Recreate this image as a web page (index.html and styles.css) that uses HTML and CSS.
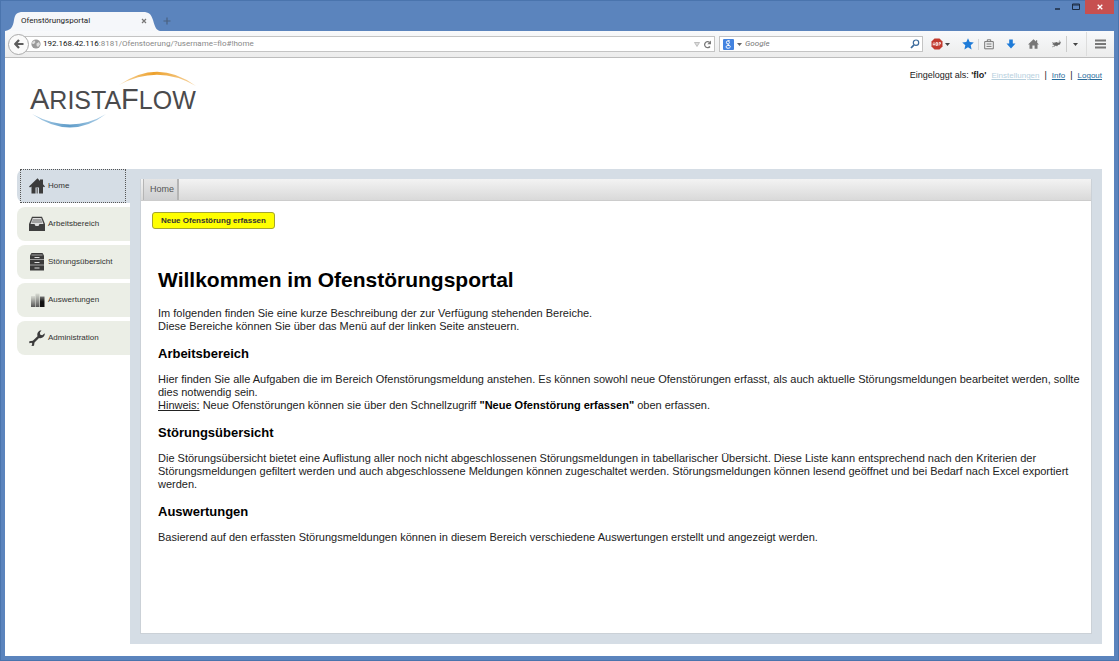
FILE: index.html
```html
<!DOCTYPE html>
<html lang="de">
<head>
<meta charset="utf-8">
<title>Ofenstörungsportal</title>
<link rel="stylesheet" href="styles.css">
</head>
<body>
<div class="window">
  <header class="titlebar">
    <div class="tab">
      <svg class="tab-shape" viewBox="0 0 155 20" preserveAspectRatio="none" aria-hidden="true"><path d="M0 20C6 19 8 16 9 9C10 3 12 1 18 1H138C144 1 146 3 148 9C150 16 151 19 155 20Z" fill="#f5f7fa"/></svg>
      <span class="tab-title">Ofenstörungsportal</span>
      <button class="tab-close" aria-label="Tab schließen"><svg width="6" height="6" viewBox="0 0 6 6"><path d="M1 1L5 5M5 1L1 5" stroke="#777" stroke-width="1.2"/></svg></button>
    </div>
    <button class="new-tab" aria-label="Neuer Tab"><svg width="8" height="8" viewBox="0 0 8 8"><path d="M4 .5V7.500M.5 4H7.500" stroke="#4a6180" stroke-width="1.200"/></svg></button>
    <div class="win-controls">
      <button class="win-btn" aria-label="Minimieren"><svg width="8" height="8" viewBox="0 0 8 8"><path d="M1 6H6" stroke="#1c2b40" stroke-width="1.500"/></svg></button>
      <button class="win-btn" aria-label="Maximieren"><svg width="8" height="8" viewBox="0 0 8 8"><path d="M.5 1H7.500V6.500H.5ZM.5 2H7.500" fill="none" stroke="#1c2b40"/></svg></button>
      <button class="win-btn win-close" aria-label="Schließen"><svg width="6" height="6" viewBox="0 0 6 6"><path d="M.7.7L5.300 5.300M5.300.7L.7 5.300" stroke="#fff" stroke-width="1.300"/></svg></button>
    </div>
  </header>

  <div class="toolbar">
    <button class="back" aria-label="Zurück"><svg width="10" height="10" viewBox="0 0 10 10"><path d="M5 1L1.300 5L5 9M1.500 5H9.500" fill="none" stroke="#5c5c5c" stroke-width="2.200"/></svg></button>
    <div class="address" role="textbox" aria-label="Adresse">
      <svg class="globe" width="10" height="10" viewBox="0 0 10 10"><circle cx="5" cy="5" r="4.600" fill="#999"/><path d="M1 3.500L3.500 1.500L4.500 3L3 5L1.500 5ZM5.500 4.500L8 3L9 5.500L7 8L5.500 6.500Z" fill="#ddd"/></svg>
      <span class="url"><b>192.168.42.116</b>:8181/Ofenstoerung/?username=flo#!home</span>
      <svg width="6" height="5" viewBox="0 0 6 5"><path d="M.5.5H5.500L3 4.500Z" fill="#ddd" stroke="#aaa" stroke-width=".7"/></svg>
      <button class="icon-btn" aria-label="Neu laden"><svg width="9" height="9" viewBox="0 0 9 9"><path d="M7 6.500A3 3 0 1 1 6.500 2.300" fill="none" stroke="#777" stroke-width="1.300"/><path d="M8 .5V4.300H4.300Z" fill="#777"/></svg></button>
    </div>
    <label class="search">
      <svg width="11" height="11" viewBox="0 0 11 11"><rect width="11" height="11" rx="1" fill="#4383e0"/><path d="M6.800 1.800H5A1.600 1.600 0 1 0 5 5C7 5 6.700 2 5 2M5 5C4.500 6 7.300 6 7.300 7.700C7.300 9.700 3 9.700 3 8C3 6.700 4.500 6.300 6 6.500" fill="none" stroke="#fff" stroke-width="1"/></svg>
      <svg width="5" height="3" viewBox="0 0 5 3"><path d="M0 0H5L2.500 3Z" fill="#666"/></svg>
      <input class="search-input" type="text" placeholder="Google" aria-label="Suche">
      <svg width="10" height="10" viewBox="0 0 10 10"><circle cx="6" cy="3.700" r="2.700" fill="none" stroke="#3c6a9c" stroke-width="1.200"/><path d="M4 5.800L1 9" stroke="#3c6a9c" stroke-width="1.700"/></svg>
    </label>
    <div class="tools">
      <button class="icon-btn abp" aria-label="Adblock Plus"><svg width="19" height="12" viewBox="0 0 19 12"><path d="M3.500.5H8.500L11.500 3.500V8.500L8.500 11.500H3.500L.5 8.500V3.500Z" fill="#c23a2e"/><path d="M2.200 7.500V5.500L3 4.500L3.800 5.500V7.500M2.200 6.500H3.800M5 4.500V7.500H6.500V4.500ZM5 6H6.500M8 7.700V4.500H9.500V6H8" fill="none" stroke="#fff" stroke-width=".7"/><path d="M14 5H19L16.500 8Z" fill="#444"/></svg></button>
      <button class="icon-btn" aria-label="Lesezeichen"><svg width="12" height="12" viewBox="0 0 12 12"><path d="M6 .3L7.700 4.100L11.800 4.500L8.700 7.300L9.600 11.500L6 9.300L2.400 11.500L3.300 7.300L.2 4.500L4.300 4.100Z" fill="#1e7bd8"/></svg></button>
      <button class="icon-btn ruled" aria-label="Lesezeichenliste"><svg width="10" height="11" viewBox="0 0 10 11"><path d="M.7 2.600H9.300V9.800H.7ZM3.300 2.500V.8H6.700V2.500M2.500 5H7.500M2.500 7.400H7.500" fill="none" stroke="#777"/></svg></button>
      <button class="icon-btn" aria-label="Downloads"><svg width="10" height="10" viewBox="0 0 10 10"><path d="M3.200.5H6.800V4.500H9.500L5 9.500L.5 4.500H3.200Z" fill="#1e7bd8"/></svg></button>
      <button class="icon-btn" aria-label="Startseite"><svg width="11" height="10" viewBox="0 0 11 10"><path d="M5.500.2L8 2.600V1.300H9.200V3.800L11 5.500H9.500V9.700H6.600V6.500H4.400V9.700H1.500V5.500H0Z" fill="#777"/></svg></button>
      <button class="icon-btn" aria-label="Erweiterung"><svg width="11" height="9" viewBox="0 0 11 9"><path d="M2 3L6 2L7 3L10 1.500L9 4.500L7 5L6 6.500L5 5.500L2.500 7L3.500 5L1.500 4.500Z" fill="#666"/><path d="M1 2.500L4 3.500M8.500.5L8 3M1 7L4 5.500" stroke="#888" stroke-width=".7"/></svg></button>
      <button class="icon-btn ruled-left" aria-label="Mehr"><svg width="5" height="3" viewBox="0 0 5 3"><path d="M0 0H5L2.500 3Z" fill="#444"/></svg></button>
      <button class="icon-btn menu" aria-label="Menü"><svg width="11" height="10" viewBox="0 0 11 10"><path d="M0 1.500H11M0 5H11M0 8.500H11" stroke="#777" stroke-width="2"/></svg></button>
    </div>
  </div>

  <div class="page">
    <div class="page-head">
      <svg class="logo" width="172" height="62" viewBox="0 0 172 62" role="img" aria-label="AristaFlow">
        <defs>
          <linearGradient id="orange"><stop offset="0" stop-color="#f7d9a8"/><stop offset=".45" stop-color="#eda12c"/><stop offset="1" stop-color="#f6d6a6"/></linearGradient>
          <linearGradient id="blue"><stop offset="0" stop-color="#b5d4ea"/><stop offset=".5" stop-color="#5f9cc9"/><stop offset="1" stop-color="#b5d4ea"/></linearGradient>
        </defs>
        <path d="M91 17Q130-10 168 18Q130-4 91 17Z" fill="url(#orange)"/>
        <path d="M4 46Q43 73 78 46Q43 67 4 46Z" fill="url(#blue)"/>
        <g class="logo-text"><text x="2" y="41"><tspan class="cap">A</tspan><tspan class="small">RISTA</tspan><tspan class="cap">F</tspan><tspan class="small">LOW</tspan></text></g>
      </svg>
      <div class="account"><span>Eingeloggt als: <b>'flo'</b></span> <a class="disabled" href="#einstellungen">Einstellungen</a><span>|</span><a href="#info">Info</a><span>|</span><a href="#logout">Logout</a></div>
    </div>

    <div class="portal">
      <nav class="side" aria-label="Hauptmenü">
        <a class="side-item active" href="#home"><svg width="16" height="16" viewBox="0 0 16 16"><path d="M8.500.3L11 3V1.500H14V6.200L16 8.500L15 9.300L14 8.500V15.500H10V9.500H6.500V15.500H2.500V8.500L1 9.500L0 8.500Z" fill="#3b3b3b"/><path d="M7.500 10V15.500H9V10Z" fill="#777"/></svg>Home</a>
        <a class="side-item" href="#arbeitsbereich"><svg width="16" height="16" viewBox="0 0 16 16"><path d="M3 .8H13L16 8V15H0V8Z" fill="#3f3f3f"/><path d="M3.700 2H12.300L14.500 8H10.500L9.500 10H6.500L5.500 8H1.500Z" fill="#ddd"/><path d="M3.500 4H12.500M2.800 6H13.200" stroke="#666"/></svg>Arbeitsbereich</a>
        <a class="side-item" href="#stoerungen"><svg width="16" height="18" viewBox="0 0 16 18"><path d="M2.500 0H13.500L15 2.500V17.500H1V2.500Z" fill="#3b3b3b"/><path d="M1 6.500H15M1 12H15M2.500 2H13.500" stroke="#bbb" stroke-width=".8"/><path d="M5.500 4.500H10.500M5.500 9.500H10.500M5.500 15H10.500" fill="none" stroke="#ddd"/></svg>Störungsübersicht</a>
        <a class="side-item" href="#auswertungen"><svg width="16" height="16" viewBox="0 0 16 16"><defs><linearGradient id="fade" x2="0" y2="1"><stop offset="0" stop-color="#d9dcd4"/><stop offset="1" stop-color="#555"/></linearGradient><linearGradient id="dark" x2="0" y2="1"><stop offset="0" stop-color="#777"/><stop offset=".5" stop-color="#111"/></linearGradient></defs><path d="M2 4H6V15H2Z" fill="url(#fade)"/><path d="M6.500 1.500H10.500V15H6.500Z" fill="url(#fade)"/><path d="M11 4.500H15.500V15H11Z" fill="url(#dark)"/></svg>Auswertungen</a>
        <a class="side-item" href="#administration"><svg width="16" height="16" viewBox="0 0 16 16"><path d="M.3 11.300L3.800 10.800L8.500 6.200C7.700 3 9.300.5 12.500.2L10.800 2.800L11.300 4.800L13.200 5.200L15.800 3.300C16 6.700 13 8.800 10 8L5.500 12.500L5 15.800L2.500 16L3.300 13.700L2.500 12.700L.3 13.300Z" fill="#3b3b3b"/></svg>Administration</a>
      </nav>
      <main class="frame">
        <section class="panel">
          <div class="tabs" role="tablist"><button class="page-tab" role="tab" aria-selected="true">Home</button></div>
          <div class="content">
            <button class="primary">Neue Ofenstörung erfassen</button>
            <article class="article">
              <h1>Willkommen im Ofenstörungsportal</h1>
              <p>Im folgenden finden Sie eine kurze Beschreibung der zur Verfügung stehenden Bereiche.<br>Diese Bereiche können Sie über das Menü auf der linken Seite ansteuern.</p>
              <h2>Arbeitsbereich</h2>
              <p>Hier finden Sie alle Aufgaben die im Bereich Ofenstörungsmeldung anstehen. Es können sowohl neue Ofenstörungen erfasst, als auch aktuelle Störungsmeldungen bearbeitet werden, sollte dies notwendig sein.<br><u>Hinweis:</u> Neue Ofenstörungen können sie über den Schnellzugriff <b>"Neue Ofenstörung erfassen"</b> oben erfassen.</p>
              <h2>Störungsübersicht</h2>
              <p>Die Störungsübersicht bietet eine Auflistung aller noch nicht abgeschlossenen Störungsmeldungen in tabellarischer Übersicht. Diese Liste kann entsprechend nach den Kriterien der Störungsmeldungen gefiltert werden und auch abgeschlossene Meldungen können zugeschaltet werden. Störungsmeldungen können lesend geöffnet und bei Bedarf nach Excel exportiert werden.</p>
              <h2>Auswertungen</h2>
              <p>Basierend auf den erfassten Störungsmeldungen können in diesem Bereich verschiedene Auswertungen erstellt und angezeigt werden.</p>
            </article>
          </div>
        </section>
      </main>
    </div>
  </div>
</div>
</body>
</html>
```

FILE: styles.css
```css
* { box-sizing: border-box; }

body {
  margin: 0;
  font-family: "Liberation Sans", Arial, sans-serif;
  font-size: 11px;
  line-height: 13px;
  color: #222;
}

button {
  margin: 0;
  padding: 0;
  border: 0;
  background: none;
  font: inherit;
  color: inherit;
}

svg { display: block; flex: none; }

.window {
  display: flex;
  flex-direction: column;
  min-height: 100vh;
  padding: 0 5px 5px;
  background: #5b84bd;
  box-shadow: inset 0 0 0 1px #4a74ad;
}

/* Browser chrome */
.titlebar { display: flex; align-items: flex-end; height: 31px; }

.tab {
  position: relative;
  display: flex;
  align-items: center;
  width: 155px;
  height: 20px;
  padding: 0 13px 0 16px;
  font: 8px/12px Roboto, "Noto Sans", sans-serif;
  color: #222;
}
.tab-shape { position: absolute; inset: 0; width: 100%; height: 100%; }
.tab-title { position: relative; flex: 1; }
.tab-close { position: relative; }
.new-tab { padding: 0 0 6px 3px; }

.win-controls { display: flex; align-self: flex-start; margin-left: auto; }
.win-btn { display: flex; align-items: center; justify-content: center; width: 18px; height: 14px; }
.win-close { width: 29px; background: #c75050; }

.toolbar {
  display: flex;
  align-items: center;
  height: 27px;
  padding: 0 8px 0 3px;
  background: linear-gradient(#f8f9fb, #ececec);
  border-bottom: 1px solid #bdbdbd;
  font: 8px/12px Roboto, "Noto Sans", sans-serif;
}
.back {
  z-index: 1;
  display: flex;
  align-items: center;
  justify-content: center;
  width: 21px;
  height: 21px;
  border: 1px solid #aaa;
  border-radius: 50%;
  background: #fafafa;
}
.address {
  display: flex;
  flex: 1;
  align-items: center;
  gap: 3px;
  height: 16px;
  margin-left: -4px;
  padding: 0 2px 0 5px;
  border: 1px solid #c4c4c4;
  background: #fff;
  color: #888;
}
.url { flex: 1; margin-left: -1px; white-space: nowrap; }
.url b { font-weight: 400; color: #111; }
.search {
  display: flex;
  align-items: center;
  gap: 3px;
  width: 204px;
  height: 16px;
  margin-left: 4px;
  padding: 0 2px 0 3px;
  border: 1px solid #c4c4c4;
  background: #fff;
}
.search-input {
  flex: 1;
  min-width: 0;
  padding: 0;
  border: 0;
  background: none;
  font: italic 8px/12px Roboto, "Noto Sans", sans-serif;
}
.search-input::placeholder { color: #777; opacity: 1; }
.icon-btn { display: flex; align-items: center; }
.tools { display: flex; align-items: center; gap: 12px; padding-left: 8px; }
.ruled { margin-left: -8px; padding-left: 5px; border-left: 1px solid #d5d5d5; }
.ruled-left { height: 16px; margin-left: -8px; padding-left: 6px; border-left: 1px solid #ccc; }
.menu { height: 24px; margin-left: -4px; padding-left: 8px; border-left: 1px solid #ddd; }

/* Page */
.page {
  display: flex;
  flex: 1;
  flex-direction: column;
  padding: 10px 12px 12px;
  background: #fff;
}
.page-head {
  display: flex;
  align-items: flex-start;
  justify-content: space-between;
  height: 101px;
  padding-left: 11px;
}
.logo-text { font-family: "Liberation Sans", Arial, sans-serif; fill: #4a4a4c; }
.cap { font-size: 29px; }
.small { font-size: 25px; }

.account { display: flex; gap: 5px; padding-top: 1px; font-size: 9px; }
.account a { color: #2a6d9c; font-size: 8px; }
.account .disabled { color: #b7d0de; }

.portal { display: flex; flex: 1; }
.side { display: flex; flex-direction: column; gap: 4px; width: 113px; }
.side-item {
  display: flex;
  align-items: center;
  gap: 3px;
  height: 34px;
  padding: 0 0 1px 12px;
  border-radius: 8px 0 0 8px;
  background: #ebeee6;
  color: #333;
  font-size: 8px;
  text-decoration: none;
}
.side-item.active {
  position: relative;
  background: #d5dde5;
}
.side-item.active::after {
  content: "";
  position: absolute;
  inset: 0 4px 0 3px;
  border: 1px dotted #555;
}

.frame { display: flex; flex: 1; padding: 10px; background: #d5dde5; }
.panel { display: flex; flex: 1; flex-direction: column; background: #fff; border: 1px solid #cbd1d7; border-top: 0; }
.tabs {
  display: flex;
  height: 22px;
  padding-left: 2px;
  background: linear-gradient(#f3f3f3, #d9d9d9);
  border-bottom: 1px solid #ccc;
}
.page-tab {
  padding: 0 3px 0 6px;
  border-left: 1px solid #b5b5b5;
  border-right: 2px solid #b5b5b5;
  background: linear-gradient(#e5e5e5, #cecfd1);
  font-size: 9px;
  color: #555;
}
.content { padding: 11px 6px 12px 11px; }
.primary {
  height: 17px;
  padding: 0 8px;
  border: 1px solid #a5a52e;
  border-radius: 3px;
  background: #ff0;
  font-size: 8px;
  font-weight: 700;
  line-height: 13px;
  color: #333;
}
.article { padding: 38px 0 0 6px; }
.article h1 { margin: 0 0 14px; font-size: 21px; line-height: 26px; color: #000; }
.article h2 { margin: 14px 0 12px; font-size: 13px; line-height: 14px; color: #000; }
.article p { margin: 0; }
.article b { color: #000; }
```
